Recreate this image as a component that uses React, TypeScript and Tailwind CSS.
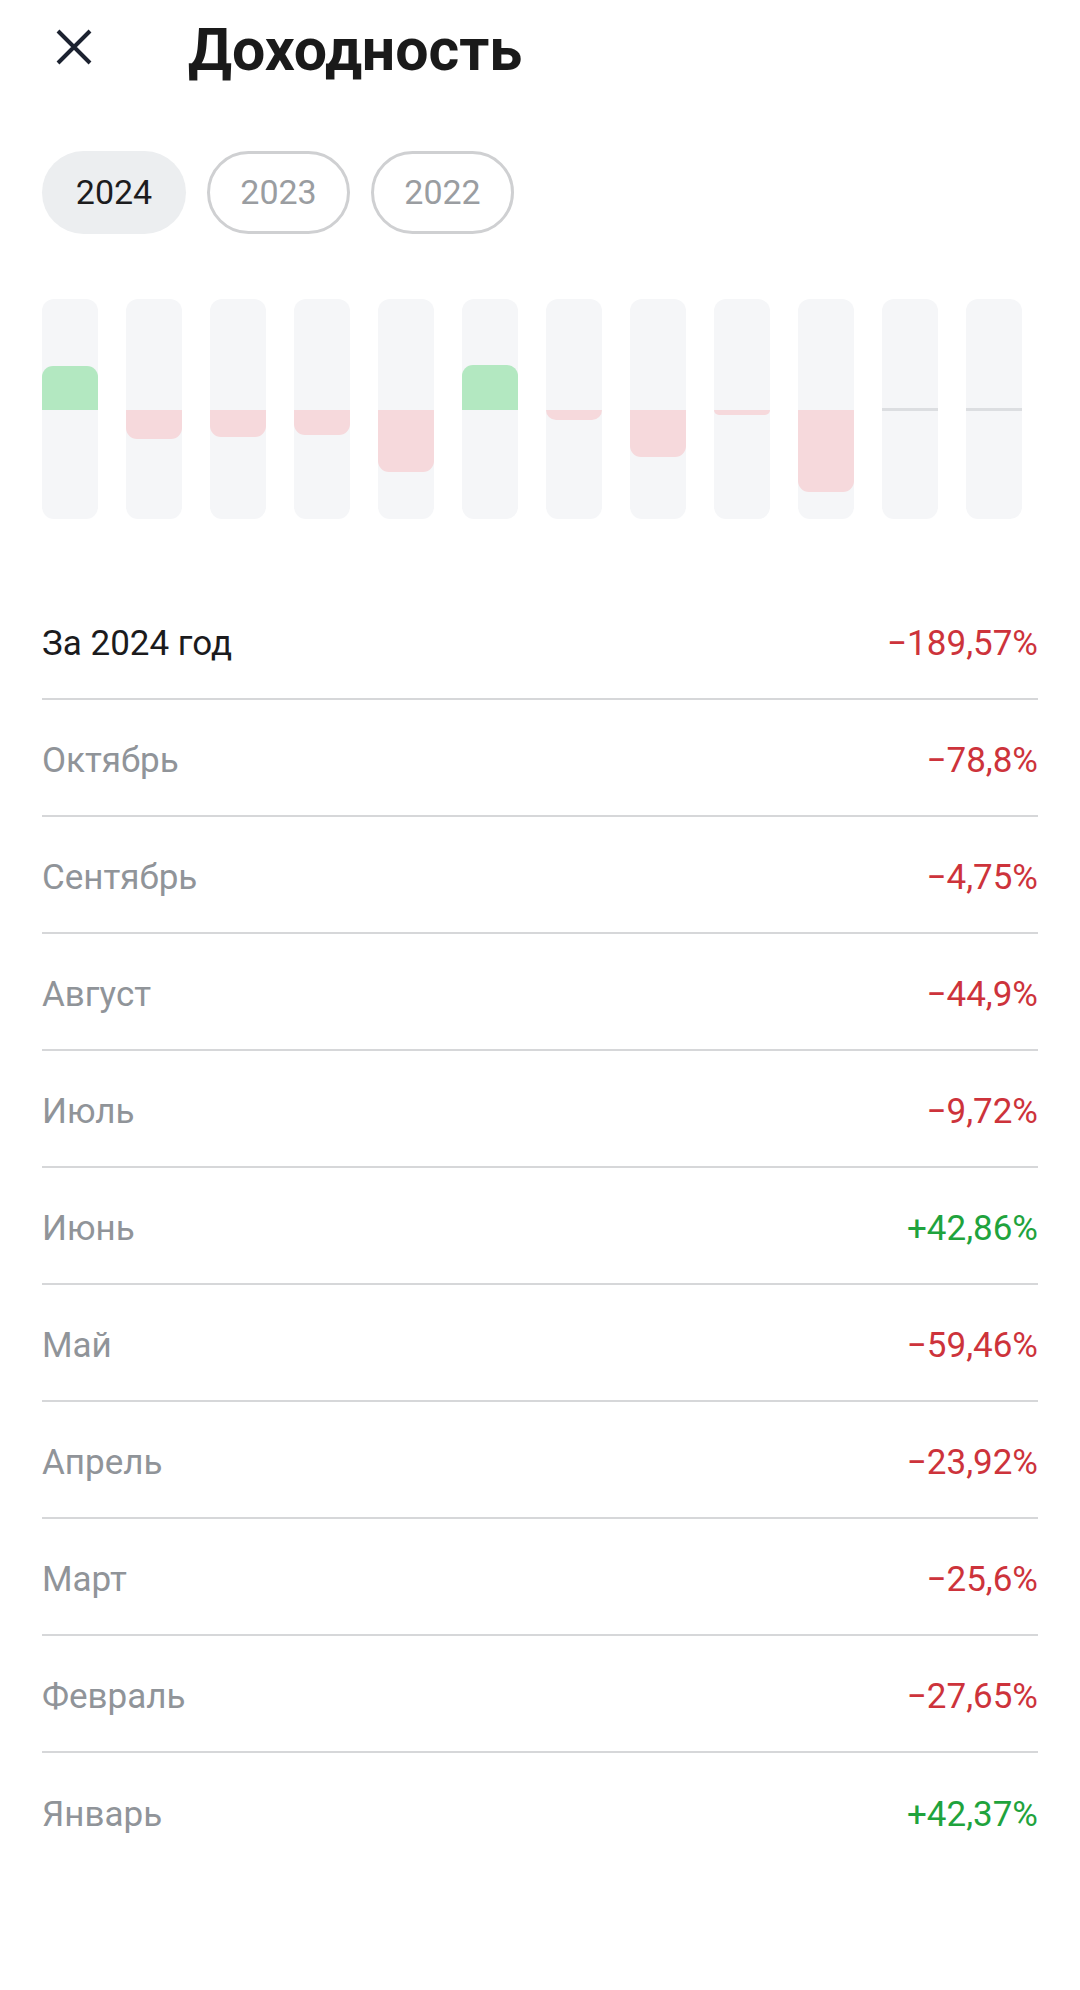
const months = [
  { name: 'Январь', value: 42.37 },
  { name: 'Февраль', value: -27.65 },
  { name: 'Март', value: -25.6 },
  { name: 'Апрель', value: -23.92 },
  { name: 'Май', value: -59.46 },
  { name: 'Июнь', value: 42.86 },
  { name: 'Июль', value: -9.72 },
  { name: 'Август', value: -44.9 },
  { name: 'Сентябрь', value: -4.75 },
  { name: 'Октябрь', value: -78.8 },
  { name: 'Ноябрь', value: null },
  { name: 'Декабрь', value: null },
];

const formatValue = (v: number) => {
  const sign = v > 0 ? '+' : '\u2212';
  return sign + Math.abs(v).toString().replace('.', ',') + '%';
};

const Bar = ({ value }: { value: number | null }) => {
  const h = value === null ? 0 : Math.max(Math.abs(value) * 1.04, 4);

  return (
    <div className="relative flex h-[220px] w-[56px] flex-col rounded-[12px] bg-[#f5f6f8]">
      <div className="flex h-[111px] flex-col justify-end">
        {value !== null && value > 0 && (
          <div className="w-full rounded-t-[11px] bg-[#b3e8c1]" style={{ height: h }} />
        )}
      </div>
      <div className="flex flex-1 flex-col">
        {value !== null && value < 0 && (
          <div className="w-full rounded-b-[11px] bg-[#f6d9dc]" style={{ height: h }} />
        )}
      </div>
      {value === null && <div className="absolute left-0 right-0 top-[109px] h-[3px] bg-[#dcdee1]" />}
    </div>
  );
};

const Row = ({ label, value, main, last }: { label: string; value: number; main?: boolean; last?: boolean }) => (
  <div
    className={`flex h-[117px] items-center justify-between ${last ? '' : 'border-b-2 border-[#d6d7d9]'}`}
  >
    <span className={`pt-[8px] text-[35px] ${main ? 'text-[#1b1b1d]' : 'text-[#909499]'}`}>{label}</span>
    <span className={`pt-[8px] text-[35px] ${value > 0 ? 'text-[#1fa33d]' : 'text-[#cd333b]'}`}>{formatValue(value)}</span>
  </div>
);

export default function App() {
  const rows = [...months].filter((m) => m.value !== null).reverse();

  return (
    <div className="min-h-[1990px] w-[1080px] bg-white font-['Roboto',sans-serif]">
      <header className="flex items-start pl-[56px] pt-[20px]">
        <svg viewBox="0 0 36 36" className="mt-[9px] h-[36px] w-[36px]" fill="none" stroke="#1c2230" strokeWidth="4">
          <path d="M2 2L34 34M34 2L2 34" />
        </svg>
        <h1 className="ml-[96px] text-[59px] font-bold leading-none text-[#1a1a1a]">Доходность</h1>
      </header>

      <div className="mt-[72px] flex gap-[21px] px-[42px]">
        <button className="flex h-[83px] w-[144px] items-center justify-center rounded-full bg-[#eceef0] text-[34px] text-[#1c1c1e]">
          2024
        </button>
        <button className="flex h-[83px] w-[143px] items-center justify-center rounded-full border-[3px] border-[#cfd0d2] text-[34px] text-[#9a9da1]">
          2023
        </button>
        <button className="flex h-[83px] w-[143px] items-center justify-center rounded-full border-[3px] border-[#cfd0d2] text-[34px] text-[#9a9da1]">
          2022
        </button>
      </div>

      <div className="mt-[65px] flex gap-[28px] px-[42px]">
        {months.map((m) => (
          <Bar key={m.name} value={m.value} />
        ))}
      </div>

      <div className="mt-[64px] px-[42px]">
        <Row label="За 2024 год" value={-189.57} main />
        {rows.map((m, i) => (
          <Row key={m.name} label={m.name} value={m.value as number} last={i === rows.length - 1} />
        ))}
      </div>
    </div>
  );
}
